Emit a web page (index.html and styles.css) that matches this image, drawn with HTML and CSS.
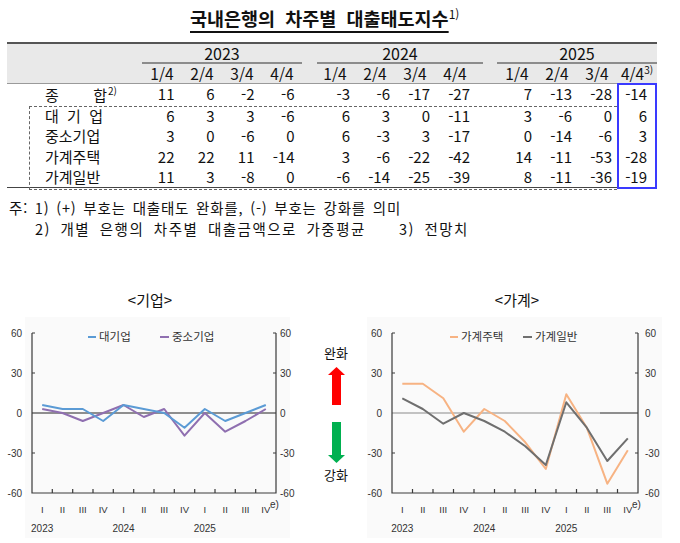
FILE: index.html
```html
<!DOCTYPE html>
<html lang="ko">
<head>
<meta charset="utf-8">
<link rel="stylesheet" href="styles.css">
</head>
<body>
<main class="page">
  <h1 class="title"><span>국내은행의 차주별 대출태도지수</span><sup>1)</sup></h1>

  <div class="tbl">
    <div class="thead">
      <div class="row-yr">
        <div class="lab"></div>
        <div class="yr y23">2023</div>
        <div class="yr y24">2024</div>
        <div class="yr y25">2025</div>
      </div>
      <div class="row">
        <div class="lab"></div>
        <div class="q">1/4</div><div class="q">2/4</div><div class="q">3/4</div><div class="q">4/4</div>
        <span class="sp"></span>
        <div class="q">1/4</div><div class="q">2/4</div><div class="q">3/4</div><div class="q">4/4</div>
        <span class="sp"></span>
        <div class="q">1/4</div><div class="q">2/4</div><div class="q">3/4</div><div class="q">4/4<sup>3)</sup></div>
      </div>
    </div>
    <div class="tbody">
      <div class="row first">
        <div class="lab"><span class="nm wide"><b>종</b><b>합</b></span><sup class="lsup">2)</sup></div>
        <div>11</div><div>6</div><div>-2</div><div>-6</div><span class="sp"></span>
        <div>-3</div><div>-6</div><div>-17</div><div>-27</div><span class="sp"></span>
        <div>7</div><div>-13</div><div>-28</div><div>-14</div>
      </div>
      <div class="row">
        <div class="lab"><span class="nm"><b>대</b><b>기</b><b>업</b></span></div>
        <div>6</div><div>3</div><div>3</div><div>-6</div><span class="sp"></span>
        <div>6</div><div>3</div><div>0</div><div>-11</div><span class="sp"></span>
        <div>3</div><div>-6</div><div>0</div><div>6</div>
      </div>
      <div class="row">
        <div class="lab"><span class="nm">중소기업</span></div>
        <div>3</div><div>0</div><div>-6</div><div>0</div><span class="sp"></span>
        <div>6</div><div>-3</div><div>3</div><div>-17</div><span class="sp"></span>
        <div>0</div><div>-14</div><div>-6</div><div>3</div>
      </div>
      <div class="row">
        <div class="lab"><span class="nm">가계주택</span></div>
        <div>22</div><div>22</div><div>11</div><div>-14</div><span class="sp"></span>
        <div>3</div><div>-6</div><div>-22</div><div>-42</div><span class="sp"></span>
        <div>14</div><div>-11</div><div>-53</div><div>-28</div>
      </div>
      <div class="row">
        <div class="lab"><span class="nm">가계일반</span></div>
        <div>11</div><div>3</div><div>-8</div><div>0</div><span class="sp"></span>
        <div>-6</div><div>-14</div><div>-25</div><div>-39</div><span class="sp"></span>
        <div>8</div><div>-11</div><div>-36</div><div>-19</div>
      </div>
    </div>
    <div class="dash-box"></div>
    <div class="hl-box"></div>
  </div>

  <div class="notes">
    <p class="n1">주: 1) (+) 부호는 대출태도 완화를, (-) 부호는 강화를 의미</p>
    <p class="n2">2) 개별 은행의 차주별 대출금액으로 가중평균<span class="n3">3) 전망치</span></p>
  </div>

  <section class="charts">
    <figure class="chart chart-l">
      <figcaption class="ctitle">&lt;기업&gt;</figcaption>
      <svg class="plot" width="300" height="231" viewBox="0 0 300 231">
        <rect class="panel" x="25" y="5" width="265" height="221"/>
        <line class="zero" x1="32" y1="101" x2="276" y2="101"/>
        <polyline class="s-purple" points="42.2,97 62.5,101 82.8,109 103.2,101 123.5,93 143.8,105 164.2,97 184.5,123.7 204.8,101 225.2,119.7 245.5,109 265.8,97"/>
        <polyline class="s-blue" points="42.2,93 62.5,97 82.8,97 103.2,109 123.5,93 143.8,97 164.2,101 184.5,115.7 204.8,97 225.2,109 245.5,101 265.8,93"/>
        <path class="axis" d="M32 21V181H276V21"/>
        <path class="axis" d="M32 21h3M32 61h3M32 141h3M273 21h3M273 61h3M273 141h3M52.3 181v-4M72.7 181v-4M93 181v-4M113.3 181v-4M133.7 181v-4M154 181v-4M174.3 181v-4M194.7 181v-4M215 181v-4M235.3 181v-4M255.7 181v-4"/>
        <g class="ax ax-end">
          <text x="22" y="25">60</text><text x="22" y="65">30</text><text x="22" y="105">0</text><text x="22" y="145">-30</text><text x="22" y="185">-60</text>
        </g>
        <g class="ax">
          <text x="280" y="25">60</text><text x="280" y="65">30</text><text x="280" y="105">0</text><text x="280" y="145">-30</text><text x="280" y="185">-60</text>
        </g>
        <g class="ax ax-mid cat">
          <text x="42.2" y="201">I</text><text x="62.5" y="201">II</text><text x="82.8" y="201">III</text><text x="103.2" y="201">IV</text>
          <text x="123.5" y="201">I</text><text x="143.8" y="201">II</text><text x="164.2" y="201">III</text><text x="184.5" y="201">IV</text>
          <text x="204.8" y="201">I</text><text x="225.2" y="201">II</text><text x="245.5" y="201">III</text><text x="265.8" y="201">IV</text>
        </g>
        <text class="ax sup" x="270" y="196">e)</text>
        <g class="ax ax-mid">
          <text x="42.2" y="220">2023</text><text x="123.5" y="220">2024</text><text x="204.8" y="220">2025</text>
        </g>
        <line class="s-blue" x1="88" y1="25" x2="96" y2="25"/>
        <text class="lg" x="99" y="29">대기업</text>
        <line class="s-purple" x1="160" y1="25" x2="169" y2="25"/>
        <text class="lg" x="172" y="29">중소기업</text>
      </svg>
    </figure>

    <div class="mid">
      <span class="mlab">완화</span>
      <svg class="arrow up" width="17" height="38" viewBox="0 0 17 38"><polygon points="8.5,0 17,8 13,8 13,38 4,38 4,8 0,8"/></svg>
      <svg class="arrow down" width="17" height="41" viewBox="0 0 17 41"><polygon points="4,0 13,0 13,33 17,33 8.5,41 0,33 4,33"/></svg>
      <span class="mlab">강화</span>
    </div>

    <figure class="chart chart-r">
      <figcaption class="ctitle">&lt;가계&gt;</figcaption>
      <svg class="plot" width="318" height="231" viewBox="0 0 318 231">
        <rect class="panel" x="5" y="5" width="295" height="221"/>
        <line class="zero gray" x1="30" y1="101" x2="276" y2="101"/>
        <line class="zero dk" x1="238" y1="101" x2="276" y2="101"/>
        <polyline class="s-orange" points="40.3,71.7 60.8,71.7 81.3,86.3 101.8,119.7 122.3,97 142.8,109 163.3,130.3 183.8,157 204.3,82.3 224.8,115.7 245.3,171.7 265.8,138.3"/>
        <polyline class="s-gray" points="40.3,86.3 60.8,97 81.3,111.7 101.8,101 122.3,109 142.8,119.7 163.3,134.3 183.8,153 204.3,90.3 224.8,115.7 245.3,149 265.8,126.3"/>
        <path class="axis" d="M30 21V181H276V21"/>
        <path class="axis" d="M30 21h3M30 61h3M30 141h3M273 21h3M273 61h3M273 141h3M50.5 181v-4M71 181v-4M91.5 181v-4M112 181v-4M132.5 181v-4M153 181v-4M173.5 181v-4M194 181v-4M214.5 181v-4M235 181v-4M255.5 181v-4"/>
        <g class="ax ax-end">
          <text x="20" y="25">60</text><text x="20" y="65">30</text><text x="20" y="105">0</text><text x="20" y="145">-30</text><text x="20" y="185">-60</text>
        </g>
        <g class="ax">
          <text x="283" y="25">60</text><text x="283" y="65">30</text><text x="283" y="105">0</text><text x="283" y="145">-30</text><text x="283" y="185">-60</text>
        </g>
        <g class="ax ax-mid cat">
          <text x="40.3" y="201">I</text><text x="60.8" y="201">II</text><text x="81.3" y="201">III</text><text x="101.8" y="201">IV</text>
          <text x="122.3" y="201">I</text><text x="142.8" y="201">II</text><text x="163.3" y="201">III</text><text x="183.8" y="201">IV</text>
          <text x="204.3" y="201">I</text><text x="224.8" y="201">II</text><text x="245.3" y="201">III</text><text x="265.8" y="201">IV</text>
        </g>
        <text class="ax sup" x="270" y="196">e)</text>
        <g class="ax ax-mid">
          <text x="40.3" y="220">2023</text><text x="122.3" y="220">2024</text><text x="204.3" y="220">2025</text>
        </g>
        <line class="s-orange" x1="88" y1="25" x2="96" y2="25"/>
        <text class="lg" x="99" y="29">가계주택</text>
        <line class="s-gray" x1="161" y1="25" x2="170" y2="25"/>
        <text class="lg" x="173" y="29">가계일반</text>
      </svg>
    </figure>
  </section>
</main>
</body>
</html>
```

FILE: styles.css
```css
* { box-sizing: border-box; }
body {
  margin: 0;
  background: #fff;
  color: #111;
  font-family: "Noto Sans CJK KR", "Noto Sans", sans-serif;
}
.page { width: 680px; height: 543px; overflow: hidden; }

.title {
  margin: 0;
  height: 42px;
  padding: 5px 0 0 190px;
  font-size: 18.5px;
  line-height: 26px;
  font-weight: 700;
  word-spacing: 5px;
}
.title span {
  text-decoration: underline;
  text-decoration-thickness: 1.5px;
  text-underline-offset: 5px;
}
.title sup { font-size: 12px; line-height: 0; vertical-align: 7px; font-weight: 400; }

/* table */
.tbl { position: relative; margin-left: 7px; width: 650px; font-size: 15px; }
.thead {
  background: #e9e9e9;
  border-top: 2px solid #555;
  border-bottom: 1px solid #9a9a9a;
}
.row, .row-yr {
  display: grid;
  grid-template-columns: 135px repeat(4, 40px) 13px repeat(4, 40px) 22px repeat(4, 40px);
}
.row-yr { height: 20px; }
.yr {
  font-size: 16px;
  line-height: 18px;
  text-align: center;
  border-bottom: 2px solid #8c8c8c;
}
.y23 { grid-column: 2 / span 4; }
.y24 { grid-column: 7 / span 5; margin: 0 14px 0 2px; }
.y25 { grid-column: 12 / span 4; }
.thead .row { height: 19px; }
.q { text-align: center; font-size: 15.5px; line-height: 19px; white-space: nowrap; }
.q sup { font-size: 10px; line-height: 0; vertical-align: 6px; }
.lsup { font-size: 10px; line-height: 12px; align-self: flex-start; margin-top: 1px; margin-left: 1px; }

.tbody { border-bottom: 1.5px solid #444; }
.tbody .row { height: 20.25px; line-height: 20px; }
.tbody .row.first { height: 22px; line-height: 20px; }
.tbody .row > div { text-align: right; white-space: nowrap; }
.tbody .row > div:nth-child(-n+5) { padding-right: 7.5px; }
.tbody .row > div:nth-child(n+7):nth-child(-n+10) { padding-right: 5px; }
.tbody .row > div:nth-child(n+12) { padding-right: 5px; }
.tbody .row > div:nth-child(15) { padding-right: 10px; }
.tbody .row > div.lab { text-align: left; padding-left: 38px; padding-right: 0; display: flex; align-items: center; }
.nm { display: inline-flex; justify-content: space-between; width: 58px; }
.nm.wide { width: 62px; }
.nm b { font-weight: 400; }

.dash-box {
  position: absolute;
  left: 22px; top: 64px;
  width: 588px; height: 84px;
  border: 1px dashed #666;
  border-right: none;
}
.hl-box {
  position: absolute;
  left: 610px; top: 41px;
  width: 40px; height: 106px;
  border: 2px solid #3a3aff;
}

/* notes */
.notes { margin-top: 9px; font-size: 14.5px; line-height: 21px; }
.notes p { margin: 0; white-space: nowrap; }
.n1 { padding-left: 9px; letter-spacing: 0.8px; word-spacing: 2px; }
.n2 { padding-left: 35px; letter-spacing: 1.5px; word-spacing: 4px; }
.n3 { margin-left: 33px; }

/* charts */
.charts { display: flex; margin-top: 49px; }
.chart { margin: 0; }
.chart-l { width: 300px; }
.chart-r { width: 318px; }
.ctitle { font-size: 15px; line-height: 24px; height: 24px; text-align: center; }
.chart-r .ctitle { padding-right: 8px; }
.plot { display: block; overflow: visible; }
.panel { fill: #fafafa; }
.axis { fill: none; stroke: #3a3a3a; stroke-width: 1.2; }
.zero { stroke: #222; stroke-width: 1; }
.zero.gray { stroke: #8a8a8a; }
.zero.dk { stroke: #5a5a5a; }
.s-blue, .s-purple, .s-orange, .s-gray { fill: none; stroke-width: 2; stroke-linejoin: round; }
.s-blue { stroke: #5b9bd5; }
.s-purple { stroke: #8f6fb0; }
.s-orange { stroke: #f7b383; }
.s-gray { stroke: #6f6f6f; }
.ax { font-family: "Liberation Sans", sans-serif; font-size: 10px; fill: #333; }
.ax-end { text-anchor: end; }
.ax-mid { text-anchor: middle; }
.cat { font-size: 9.5px; }
.sup { font-size: 10px; }
.lg { font-family: "Noto Sans CJK KR", sans-serif; font-size: 11.5px; fill: #333; }

.mid {
  width: 62px;
  padding: 56px 0 0 10px;
  display: flex;
  flex-direction: column;
  align-items: center;
}
.mlab { font-size: 13px; line-height: 18px; }
.arrow { display: block; }
.arrow.up { margin-top: 5px; fill: #ff0000; }
.arrow.down { margin-top: 17px; fill: #00b050; }
.arrow.down + .mlab { margin-top: 3px; }
```
